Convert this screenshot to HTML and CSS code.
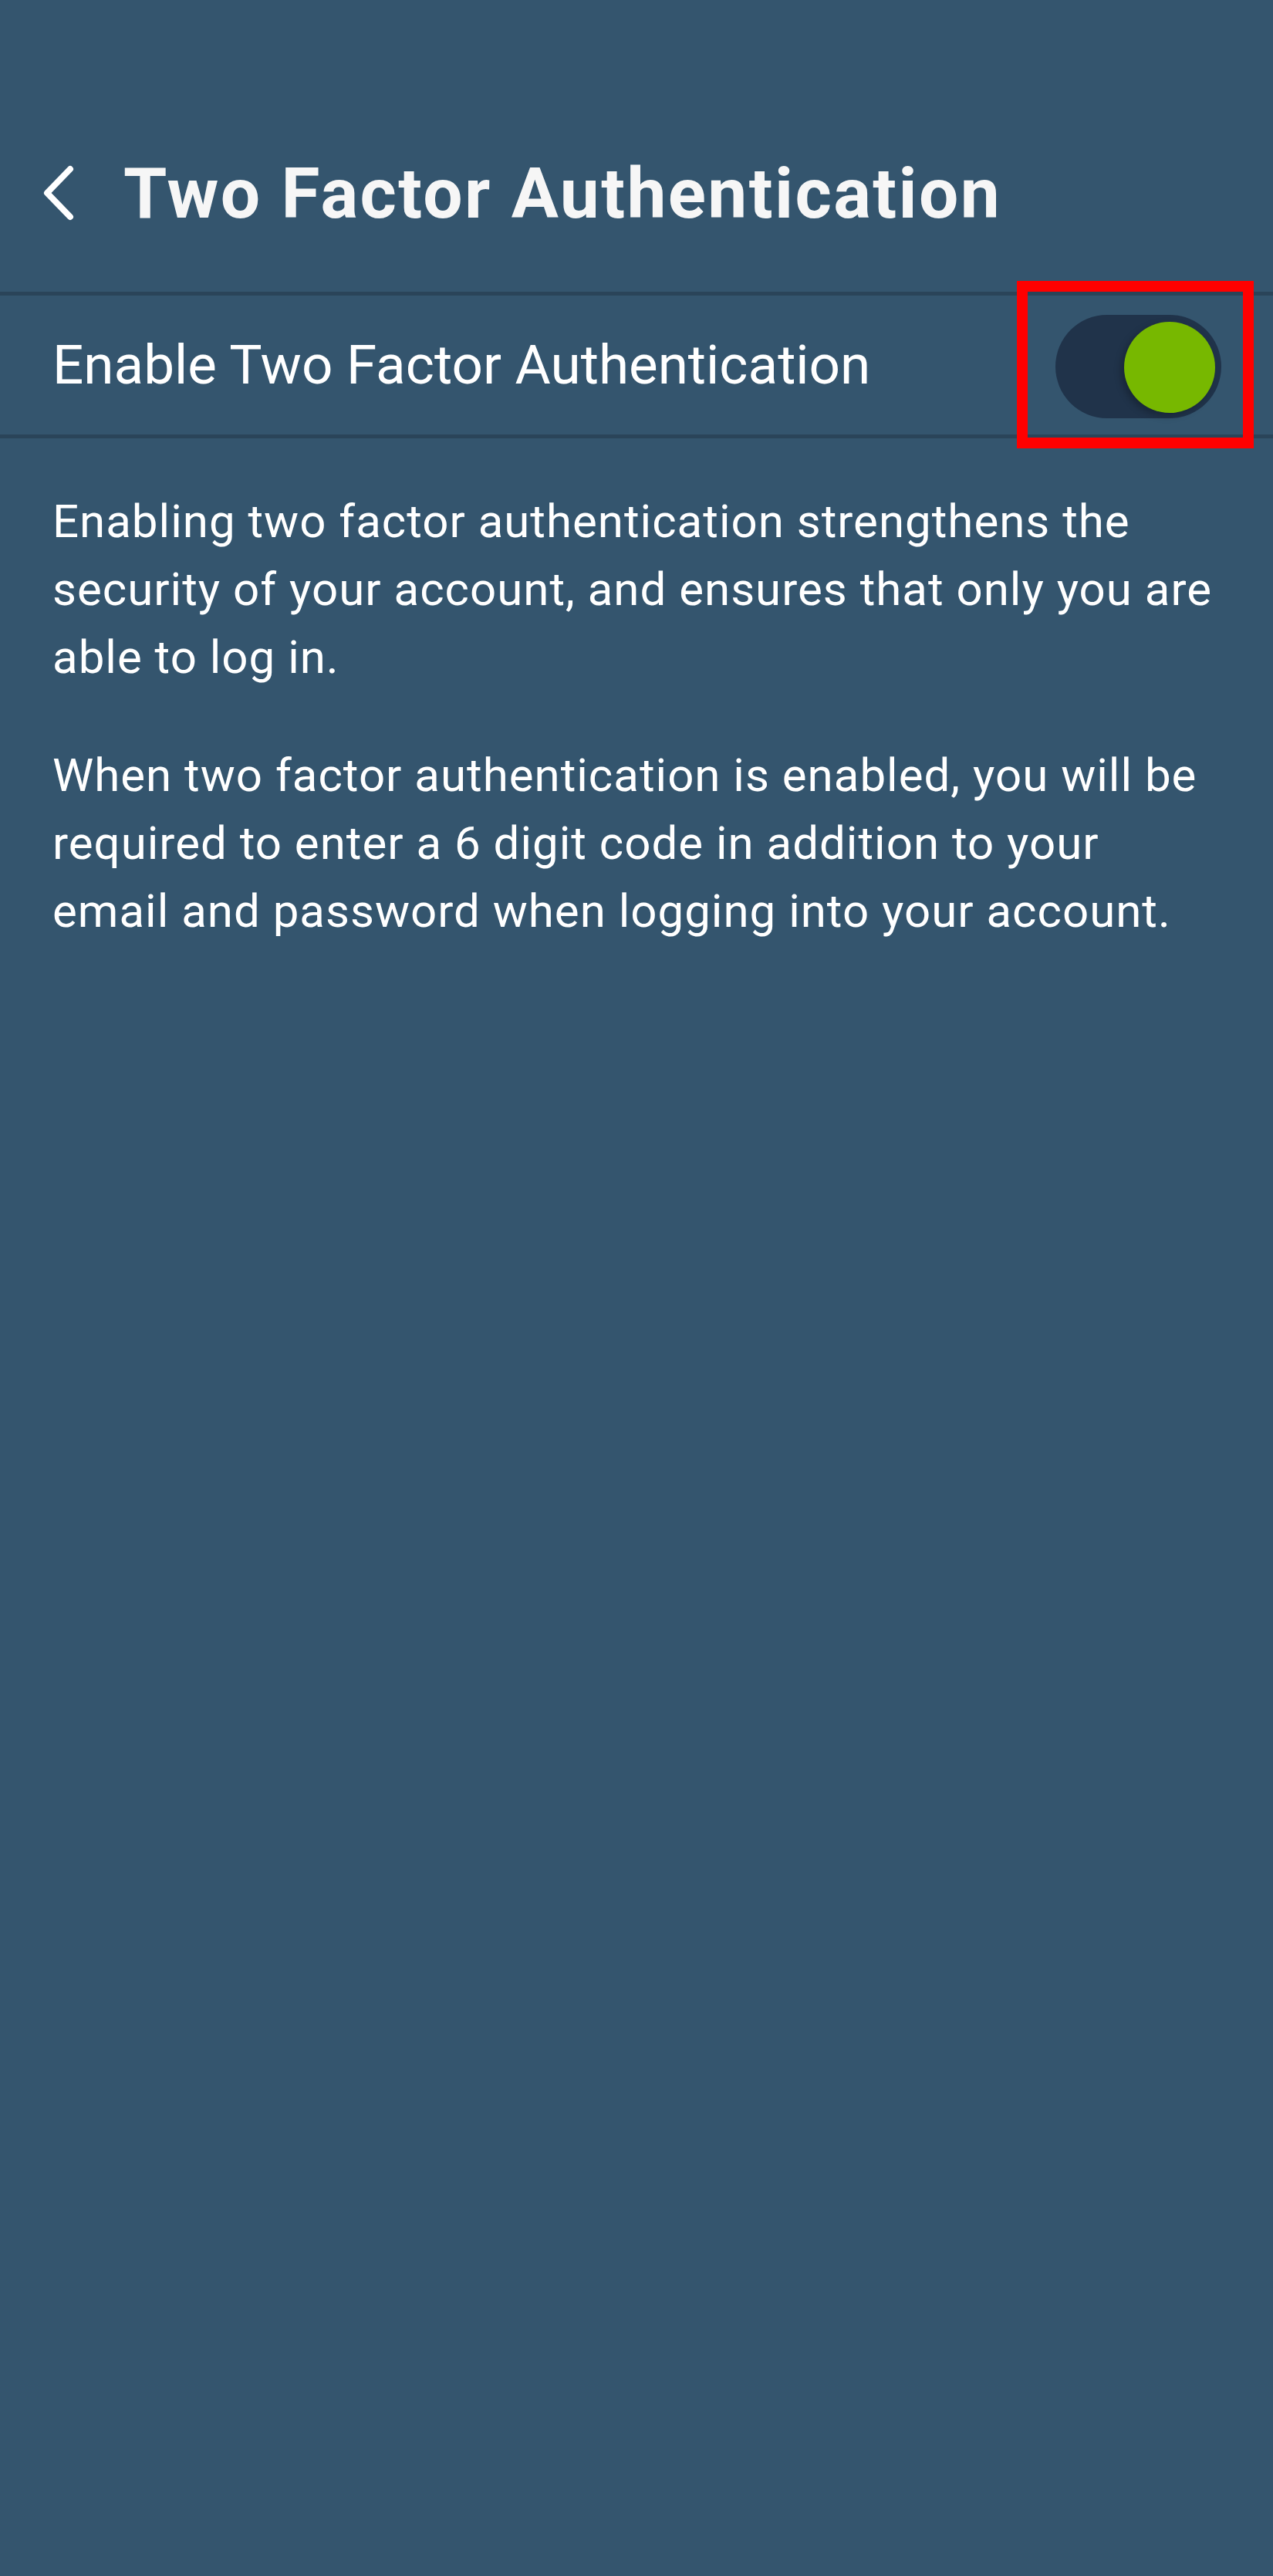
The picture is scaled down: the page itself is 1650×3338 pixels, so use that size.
FILE: index.html
```html
<!DOCTYPE html>
<html lang="en">
<head>
    <meta charset="UTF-8">
    <meta name="viewport" content="width=device-width, initial-scale=1.0">
    <title>Two Factor Authentication</title>
    <link rel="stylesheet" href="styles.css">
</head>
<body>
    <header class="app-bar">
        <svg class="back-icon" width="48" height="80" viewBox="0 0 48 80">
            <polyline points="39,8 9,39 39,70" fill="none" stroke="#ffffff" stroke-width="8" stroke-linecap="round" stroke-linejoin="round"/>
        </svg>
        <h1>Two Factor Authentication</h1>
    </header>

    <main>
        <div class="setting-row">
            <span class="setting-label">Enable Two Factor Authentication</span>
            <div class="toggle on">
                <div class="knob"></div>
            </div>
            <div class="highlight"></div>
        </div>

        <section class="info">
            <p>Enabling two factor authentication strengthens the security of your account, and ensures that only you are able to log in.</p>
            <p>When two factor authentication is enabled, you will be required to enter a 6 digit code in addition to your email and password when logging into your account.</p>
        </section>
    </main>
</body>
</html>
```

FILE: styles.css
```css
body {
    margin: 0;
    padding: 0;
    min-height: 3338px;
    background-color: #34556e;
    color: #ffffff;
    font-family: Roboto, 'Liberation Sans', sans-serif;
}

.app-bar {
    display: flex;
    align-items: center;
    padding: 192px 0 68px 52px;
    border-bottom: 5px solid #2a4459;
}

.back-icon {
    flex-shrink: 0;
    margin-right: 60px;
}

.app-bar h1 {
    margin: 0;
    font-size: 91px;
    line-height: 118px;
    font-weight: 700;
    letter-spacing: 2.4px;
    color: #f6f6f6;
}

.setting-row {
    position: relative;
    display: flex;
    align-items: center;
    justify-content: space-between;
    height: 180px;
    padding: 0 67px 0 68px;
    border-bottom: 5px solid #2a4459;
}

.setting-label {
    font-size: 71px;
    line-height: 84px;
}

.toggle {
    position: relative;
    width: 215px;
    height: 134px;
    margin-top: 4px;
    border-radius: 67px;
    background-color: #20334a;
}

.toggle .knob {
    position: absolute;
    top: 9px;
    right: 8px;
    width: 118px;
    height: 118px;
    border-radius: 50%;
    background-color: #77b800;
    box-shadow: -4px 4px 10px rgba(0, 0, 0, 0.25);
}

/* rectangle de surlignage */
.highlight {
    position: absolute;
    top: -19px;
    right: 25px;
    width: 307px;
    height: 217px;
    box-sizing: border-box;
    border: 14px solid #ff0000;
}

.info {
    padding: 64px 70px 0 68px;
}

.info p {
    margin: 0 0 65px;
    font-size: 60px;
    line-height: 88px;
    letter-spacing: 1px;
}
```
